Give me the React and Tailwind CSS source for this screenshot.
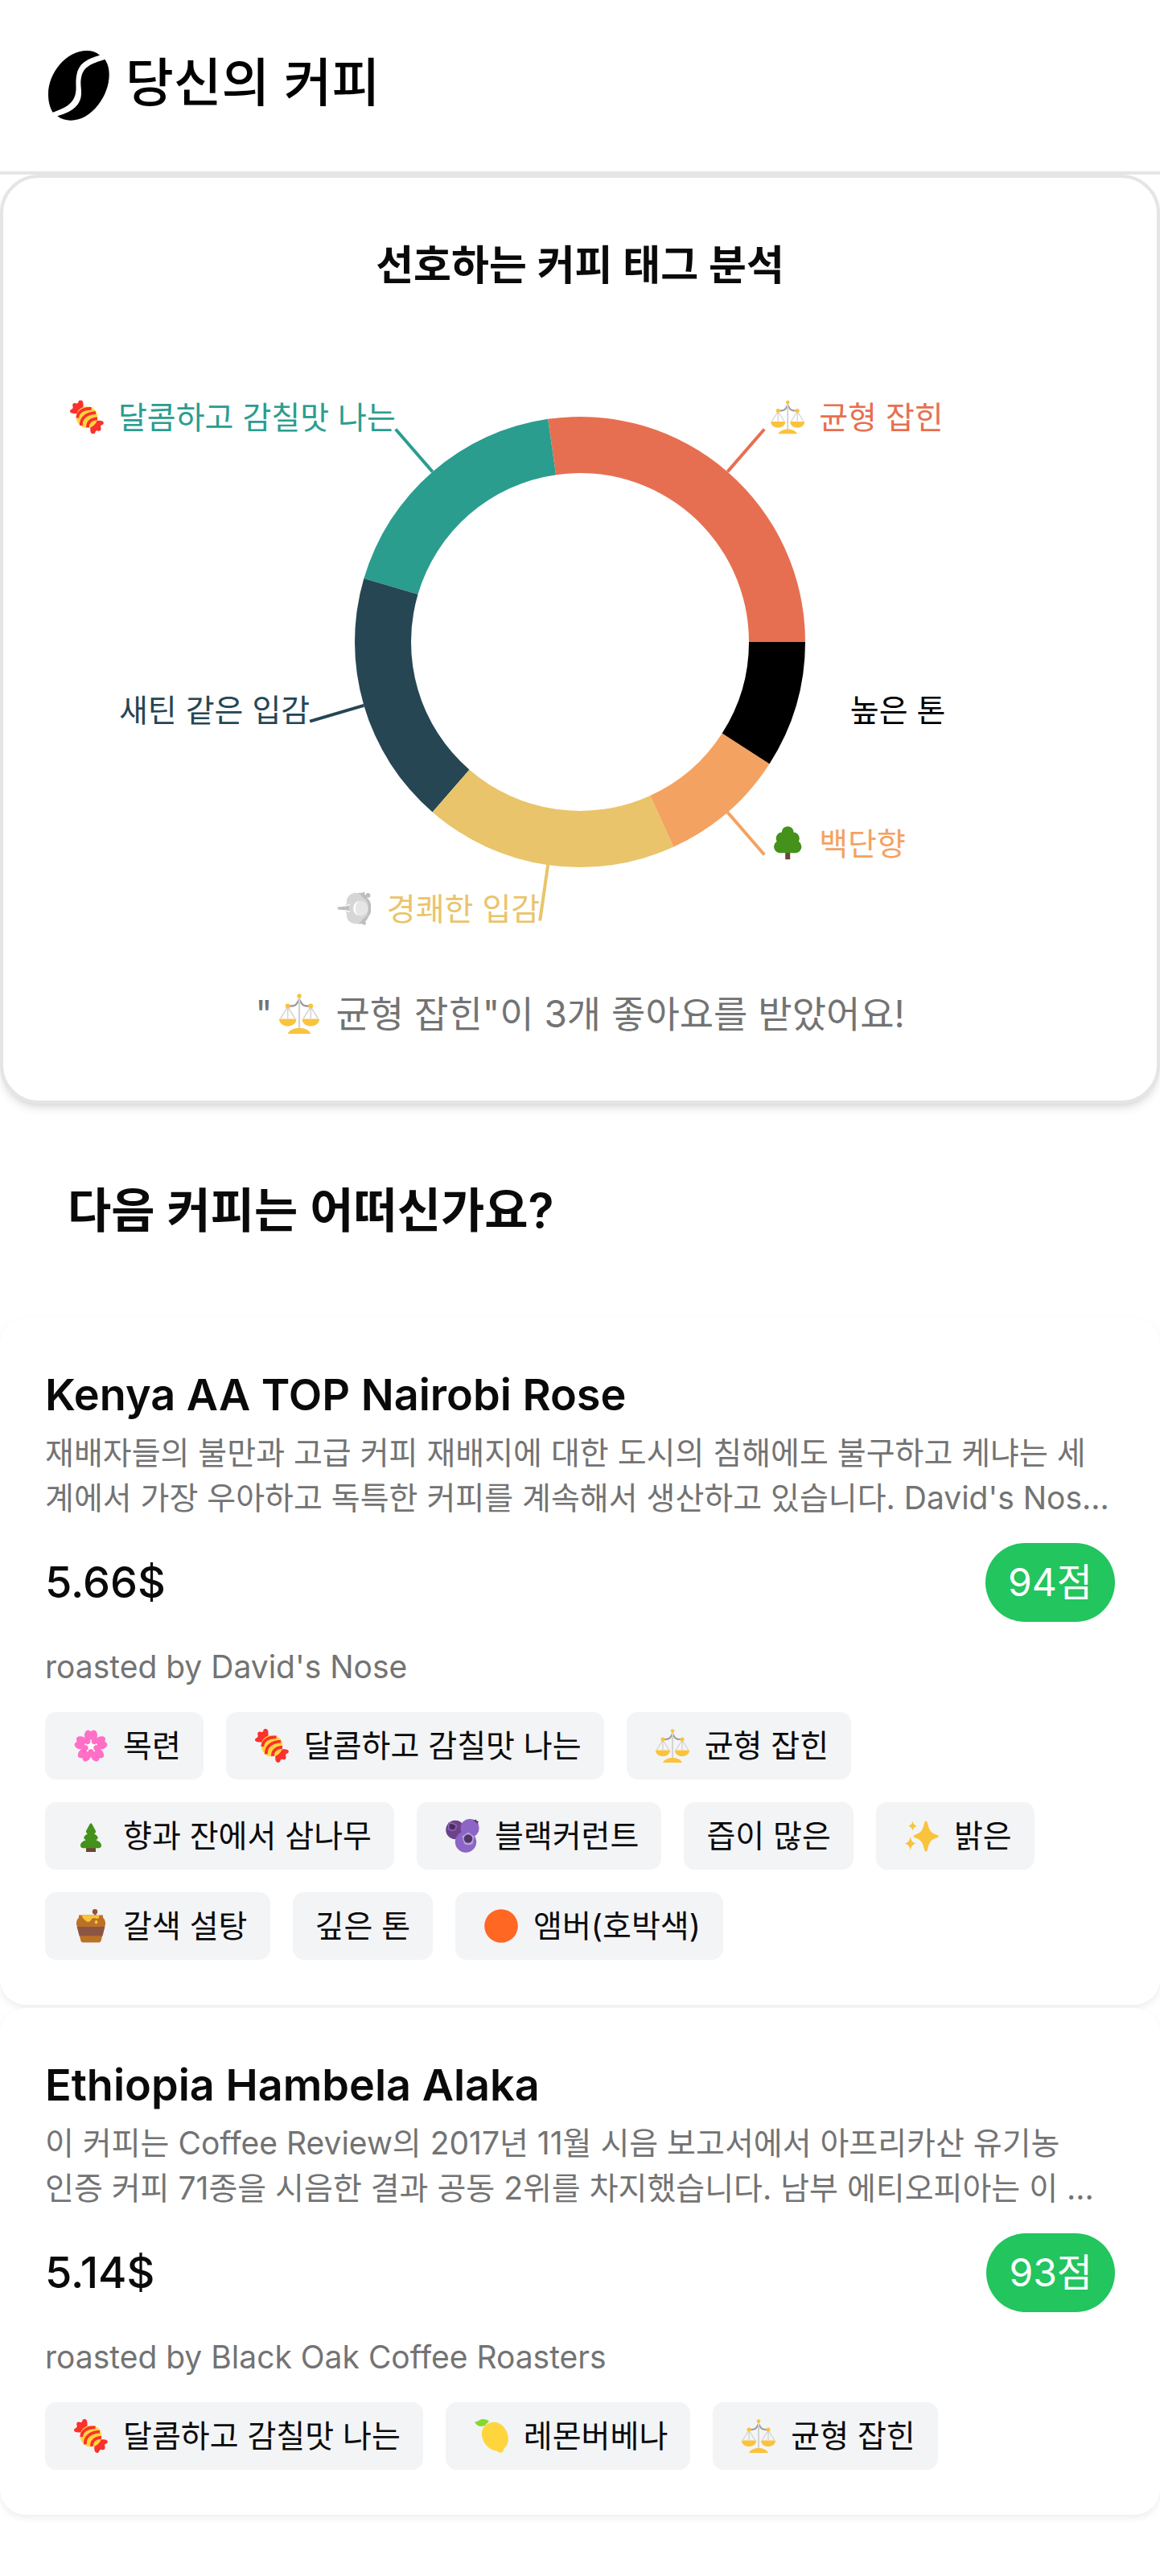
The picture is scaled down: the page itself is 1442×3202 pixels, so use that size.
import React from "react";

const YELLOW = "#fac33c";

function Blossom() {
  return (
    <g transform="translate(21 21.5)">
      {[0, 72, 144, 216, 288].map((a) => (
        <path
          key={a}
          transform={`rotate(${a})`}
          fill="#ff6fc6"
          d="M0 2C-6 -5 -10.500 -13 -6.500 -18.500Q-4.500 -21 -2 -19.600Q-1 -18.500 0 -18.500Q1 -18.500 2 -19.600Q4.500 -21 6.500 -18.500C10.500 -13 6 -5 0 2Z"
        />
      ))}
      <circle cx="0" cy="0" r="9" fill="#ff6fc6" />
      {[0, 72, 144, 216, 288].map((a) => (
        <g key={a} transform={`rotate(${a})`} fill="#fff">
          <path d="M-2.6 -1.5L0 -6.5L2.6 -1.5L0 2Z" />
          <circle cx="0" cy="-7" r="1.1" />
        </g>
      ))}
    </g>
  );
}

function Candy() {
  const wrap =
    "M9.5 16.5C6 16.6 3 16.8 1 15.5C-.6 14.3 -.3 12 2 11.2C3.5 10.6 4 9.5 3.4 7.5C2.6 4.6 4.6 2.8 7.2 3.8C9 4.4 9.9 3.8 10.4 2C11 -.6 14.2 -.8 15.6 1.2C16.8 3.2 16.6 6 16.4 9Z";
  return (
    <g>
      <path d={wrap} fill="#fa312c" />
      <path d={wrap} fill="#fa312c" transform="rotate(180 20.9 20.9)" />
      <circle cx="21" cy="21" r="13.3" fill="#ffd53e" />
      <g fill="none" stroke="#fa312c" strokeWidth="3.8">
        <path d="M9.4 22C9.2 15.5 16 9.5 26.6 10.4" />
        <path d="M14 31.4C13 23 20 15.8 32 15.6" />
        <path d="M22 33.8C21.6 27.6 26.5 22.6 34 22.8" />
      </g>
    </g>
  );
}

function Scales() {
  return (
    <g>
      <path
        d="M9 13H13C18 13 18.6 10 21 6C23.4 10 24 13 29 13H33"
        fill="none"
        stroke="#9b9b9b"
        strokeWidth="2"
      />
      <path
        d="M9 14L1.4 26M9 14L16.6 26M9 14V26M33 14L25.4 26M33 14L40.6 26M33 14V26"
        stroke="#d3d3d3"
        strokeWidth="1.3"
        fill="none"
      />
      <path d="M21 4V37" stroke="#d3d3d3" strokeWidth="2" />
      <g fill={YELLOW}>
        <circle cx="21" cy="2.6" r="2.3" />
        <circle cx="9" cy="13" r="2.5" />
        <circle cx="33" cy="13" r="2.5" />
        <path d="M0 26.4H18C18 31 14 34 9 34S0 31 0 26.4Z" />
        <path d="M24 26.4H42C42 31 38 34 33 34S24 31 24 26.4Z" />
        <path d="M9 42C10.5 38.4 15 36 21 36S31.500 38.400 33 42Z" />
      </g>
    </g>
  );
}

function Tree() {
  return (
    <g>
      <path d="M18 30H24V42H18Z" fill="#6d4534" />
      <g fill="#44911b">
        <circle cx="21" cy="8" r="7.3" />
        <circle cx="14" cy="15.500" r="7.600" />
        <circle cx="28" cy="15.500" r="7.600" />
        <circle cx="11.500" cy="26" r="7.700" />
        <circle cx="30.500" cy="26" r="7.700" />
        <path d="M11 14H31V33.700H11Z" />
      </g>
    </g>
  );
}

function Pine() {
  return (
    <g>
      <path d="M15 35H27V41H15Z" fill="#6d4534" />
      <path
        fill="#44911b"
        d="M21 5.300Q22 5.300 22.800 7L26.800 14.500C27.800 16.600 26 18 25 18.200C29 20.600 30 22.400 29.600 24C29.200 25.600 27.600 26 26.800 26C32 27.600 34 30.500 34 33C34 35.500 32.500 36.200 30 36.200H12C9.500 36.200 8 35.500 8 33C8 30.500 10 27.600 15.200 26C14.400 26 12.800 25.600 12.400 24C12 22.400 13 20.600 17 18.200C16 18 14.200 16.600 15.200 14.500L19.200 7Q20 5.300 21 5.300Z"
      />
    </g>
  );
}

function Berries() {
  return (
    <g>
      <circle cx="12" cy="13.500" r="11.800" fill="#6c4389" />
      <circle cx="30" cy="11.500" r="11.500" fill="#8d65c5" />
      <circle cx="25" cy="28.500" r="13.200" fill="#8d65c5" />
      <path d="M33.500 .8L36 1.500L38 .5L38.500 2.500L41 3L40 5L41 7Z" fill="#533566" />
      <path
        d="M4 5L9 5.500L13.400 8L12.400 13L8 14.500L3.600 12.500Z"
        fill="#533566"
        stroke="#8d65c5"
        strokeWidth="1.500"
      />
      <circle cx="8.200" cy="9.800" r="3" fill="#4a2c5c" />
      <path
        d="M28 16.500L35.500 21.500L33.500 31Q28 33.500 23 31L20.500 21.500Z"
        fill="#b4a0e0"
        strokeLinejoin="round"
      />
      <circle cx="28" cy="24.500" r="5.200" fill="#533566" />
    </g>
  );
}

function Honey() {
  return (
    <g>
      <path d="M25 4H27.500V10H25Z" fill="#8c5543" />
      <circle cx="26" cy="3.200" r="3.200" fill="#8c5543" />
      <path
        d="M6 7.500H36V10.500Q39.500 14 39 19L33.600 39.500Q33 41.500 31 41.500H11Q9 41.500 8.500 39.500L3 19Q2.500 14 6 10.500Z"
        fill="#bb7126"
      />
      <path d="M3.700 22H38.300L35.500 33.200H6.600Z" fill="#8c5543" />
      <path
        d="M10 7.500H31.500C31.500 12 29 12.500 27 11.500C24 11 22.500 11 21.500 13C20 16.500 16 16.500 14.500 14.500C12.500 12 10 12 10 7.500Z"
        fill={YELLOW}
      />
      <ellipse cx="27.600" cy="16.300" rx="1.800" ry="2.200" fill={YELLOW} />
    </g>
  );
}

function Sparkles() {
  return (
    <g fill={YELLOW}>
      <path d="M26 2.500Q27.500 2.500 28 5C30 14 32 17 39 19.500Q42 20.500 42 21.500T39 23.500C32 26 30 29 28 38Q27.500 40.500 26 40.500T24 38C22 29 20 26 13 23.500Q10.500 22.500 10.500 21.500T13 19.500C20 17 22 14 24 5Q24.500 2.500 26 2.500Z" />
      <path d="M9.500 2.800C10.500 6.500 11.500 7.600 15 8.800C11.500 10 10.500 11 9.500 14.800C8.500 11 7.500 10 4.200 8.800C7.500 7.600 8.500 6.500 9.500 2.800Z" />
      <path d="M6.700 22C8 27.500 9 29 13.500 30.500C9 32 8 33.500 6.700 39C5.400 33.500 4.400 32 0 30.500C4.400 29 5.400 27.500 6.700 22Z" />
    </g>
  );
}

function Lemon() {
  return (
    <g>
      <path
        d="M18 5C28 .5 39 8 41.500 21C42.600 27 41 32.500 37.500 35.500C36 37 36.500 39 35 40.500C33 42.500 30.500 42 29 40.500C27 39 24.500 39.500 21.500 38C12 33.500 7 22 9.500 13.500Q11.500 7.500 18 5Z"
        fill="#ffd53e"
      />
      <path d="M0 3.500C5 3.500 6 -.5 11.500 0C14.500 .3 17 1.500 18 3C15 5 13.500 9 8.500 9C4.500 9 1.500 7 0 3.500Z" fill="#86d72f" />
    </g>
  );
}

function AmberDot() {
  return <circle cx="21" cy="21" r="20.800" fill="#ff6723" />;
}

function Puff() {
  return (
    <g>
      <path
        d="M24 2C31 0 36.500 3 37.500 8C43.500 12 44.500 25 39 31C36 38 30 42 24 39Z"
        fill="#bebebe"
      />
      <path
        d="M21 1.500C26 .5 30 3 31.500 7C36.500 9 39 14 39 20.500S36.500 32 31.500 34C30 38.500 26 41 20.500 39.500C14.500 38 11.500 33 12 28.500C12 25.500 10.500 24 8 23.500L14 22.500V18.500L8 17.500C10.500 17 12 15.500 12 12.500C11.500 8 14.500 3 21 1.500Z"
        fill="#d6d6d6"
      />
      <path d="M1.500 19L15 17.600V23.400L1.500 22Q-.5 20.500 1.500 19Z" fill="#bebebe" />
      <path d="M9 17.800L16 16M9 23.200L16 25" stroke="#fff" strokeWidth="1.200" fill="none" />
      <circle cx="29" cy="20.500" r="9.500" fill="#e6e6e6" />
      <path d="M27 11C18.500 14.500 18.500 26.500 26.500 30C21.500 25 21.500 16 27 11Z" fill="#fff" />
      <circle cx="33" cy="1.500" r="1.500" fill="#bebebe" />
      <circle cx="38.500" cy="4.500" r="2.900" fill="#bebebe" />
      <circle cx="33.500" cy="39" r="2.400" fill="#bebebe" />
    </g>
  );
}

const ICONS = {
  blossom: Blossom,
  candy: Candy,
  scales: Scales,
  tree: Tree,
  pine: Pine,
  berries: Berries,
  honey: Honey,
  sparkles: Sparkles,
  lemon: Lemon,
  amber: AmberDot,
  puff: Puff,
};

function Emoji({ name, ...rest }) {
  const Shape = ICONS[name];
  return (
    <svg viewBox="0 0 42 42" aria-hidden="true" {...rest}>
      <Shape />
    </svg>
  );
}

function Header() {
  return (
    <header className="flex h-[217px] items-center border-b-4 border-[#e5e5e5] px-[60px]">
      <a href="/" className="flex items-center gap-5">
        <svg viewBox="0 0 76 87" className="h-[87px] w-[76px]" aria-hidden="true">
          <path d="M64 5.700C59.500 1.700 54 0 48 0C22 0 0 28 0 54C0 62 1.500 70 5.700 76.700C20 71.500 30 67 33.500 55C36 46 33 40 35.500 29C39 14 50 10 64 5.700Z" />
          <path d="M70.300 10.700C74 16 75.700 22 75.700 30C75.700 56 54 86.700 28 86.700C21.500 86.700 16 85 11.300 81.300C24 77.500 37.500 72 40.500 58C42.500 48 38.500 42 41.500 31C45 18 57 15.500 70.300 10.700Z" />
        </svg>
        <span className="pb-2 text-[65px] leading-none font-medium text-black">당신의 커피</span>
      </a>
    </header>
  );
}

const CX = 717;
const CY = 415;

const SEGMENTS = [
  { label: "균형 잡힌", icon: "scales", count: 3, color: "#e76f51" },
  { label: "달콤하고 감칠맛 나는", icon: "candy", count: 2, color: "#2a9d8f", iconX: 83 },
  { label: "새틴 같은 입감", count: 2, color: "#264653" },
  { label: "경쾌한 입감", icon: "puff", count: 2, color: "#e9c46a", iconX: 415 },
  { label: "백단향", icon: "tree", count: 1, color: "#f4a261" },
  { label: "높은 톤", count: 1, color: "#000000", noLine: true },
];

function polar(r, deg) {
  const a = (deg * Math.PI) / 180;
  return [CX + r * Math.cos(a), CY - r * Math.sin(a)];
}

function DonutChart() {
  const total = SEGMENTS.reduce((s, x) => s + x.count, 0);
  let from = 0;
  return (
    <svg viewBox="0 0 1434 849" className="block w-full" role="img" aria-label="선호하는 커피 태그 분석">
      {SEGMENTS.map((s) => {
        const a0 = from;
        const a1 = from + (s.count / total) * 360;
        from = a1;
        const mid = (a0 + a1) / 2;
        const [x0, y0] = polar(280, a0);
        const [x1, y1] = polar(280, a1);
        const [x2, y2] = polar(210, a1);
        const [x3, y3] = polar(210, a0);
        const [lx0, ly0] = polar(280, mid);
        const [lx, ly] = polar(350, mid);
        const right = lx > CX;
        const textX = right && s.icon ? lx + 68 : lx;
        return (
          <g key={s.label}>
            <path
              fill={s.color}
              d={`M${x0} ${y0}A280 280 0 0 0 ${x1} ${y1}L${x2} ${y2}A210 210 0 0 1 ${x3} ${y3}Z`}
            />
            {!s.noLine && <line x1={lx0} y1={ly0} x2={lx} y2={ly} stroke={s.color} strokeWidth="4" />}
            {s.icon && (
              <Emoji name={s.icon} x={right ? lx + 8 : s.iconX} y={ly - 36} width="42" height="42" />
            )}
            <text x={textX} y={ly} fill={s.color} fontSize="39" textAnchor={right ? "start" : "end"}>
              {s.label}
            </text>
          </g>
        );
      })}
    </svg>
  );
}

function AnalysisCard() {
  return (
    <section className="rounded-[48px] border-4 border-[#e5e5e5] bg-white pt-14 pb-20 text-center shadow-[0_8px_12px_-2px_rgba(0,0,0,0.1),0_4px_8px_-4px_rgba(0,0,0,0.1)]">
      <h1 className="text-[51px] leading-[106px] font-semibold">선호하는 커피 태그 분석</h1>
      <DonutChart />
      <p className="flex items-center justify-center text-[46px] leading-[56px] whitespace-pre text-[#737373]">
        <span>"</span>
        <Emoji name="scales" className="mx-2 h-[50px] w-[50px]" />
        <span> 균형 잡힌"이 3개 좋아요를 받았어요!</span>
      </p>
    </section>
  );
}

const COFFEES = [
  {
    name: "Kenya AA TOP Nairobi Rose",
    desc: "재배자들의 불만과 고급 커피 재배지에 대한 도시의 침해에도 불구하고 케냐는 세\n계에서 가장 우아하고 독특한 커피를 계속해서 생산하고 있습니다. David's Nos...",
    price: "5.66$",
    score: "94점",
    roaster: "David's Nose",
    tags: [
      ["목련", "blossom"],
      ["달콤하고 감칠맛 나는", "candy"],
      ["균형 잡힌", "scales"],
      ["향과 잔에서 삼나무", "pine"],
      ["블랙커런트", "berries"],
      ["즙이 많은"],
      ["밝은", "sparkles"],
      ["갈색 설탕", "honey"],
      ["깊은 톤"],
      ["앰버(호박색)", "amber"],
    ],
  },
  {
    name: "Ethiopia Hambela Alaka",
    desc: "이 커피는 Coffee Review의 2017년 11월 시음 보고서에서 아프리카산 유기농\n인증 커피 71종을 시음한 결과 공동 2위를 차지했습니다. 남부 에티오피아는 이 ...",
    price: "5.14$",
    score: "93점",
    roaster: "Black Oak Coffee Roasters",
    tags: [
      ["달콤하고 감칠맛 나는", "candy"],
      ["레몬버베나", "lemon"],
      ["균형 잡힌", "scales"],
    ],
  },
];

function Tag({ label, icon }) {
  return (
    <li className="flex h-[84px] items-center rounded-[14px] bg-[#f3f4f6] px-7 text-[39px] leading-[56px]">
      {icon && <Emoji name={icon} className="mr-[19px] ml-2 h-[42px] w-[42px]" />}
      {label}
    </li>
  );
}

function CoffeeCard({ coffee }) {
  return (
    <article className="rounded-[32px] bg-white p-14 shadow-[0_4px_8px_rgba(0,0,0,0.07)]">
      <h3 className="text-[54px] leading-[80px] font-semibold">{coffee.name}</h3>
      <p className="mt-1 line-clamp-2 text-[39px] leading-[56px] whitespace-pre-line text-[#737373]">{coffee.desc}</p>
      <div className="mt-7 flex items-center justify-between">
        <span className="text-[54px] leading-[78px] font-medium">{coffee.price}</span>
        <span className="rounded-full bg-[#22c55e] px-7 text-[48px] leading-[98px] text-white">{coffee.score}</span>
      </div>
      <p className="mt-7 text-[39px] leading-[56px] text-[#737373]">roasted by {coffee.roaster}</p>
      <ul className="mt-7 flex flex-wrap gap-7">
        {coffee.tags.map(([label, icon]) => (
          <Tag key={label} label={label} icon={icon} />
        ))}
      </ul>
    </article>
  );
}

export default function App() {
  return (
    <div className="min-h-screen bg-white font-['Inter','Noto_Sans_CJK_KR',sans-serif] text-[#0a0a0a]" lang="ko">
      <Header />
      <main>
        <AnalysisCard />
        <h2 className="px-[84px] py-[84px] text-[59px] leading-[98px] font-semibold">다음 커피는 어떠신가요?</h2>
        <div className="flex flex-col gap-1 pb-[76px]">
          {COFFEES.map((c) => (
            <CoffeeCard key={c.name} coffee={c} />
          ))}
        </div>
      </main>
    </div>
  );
}
